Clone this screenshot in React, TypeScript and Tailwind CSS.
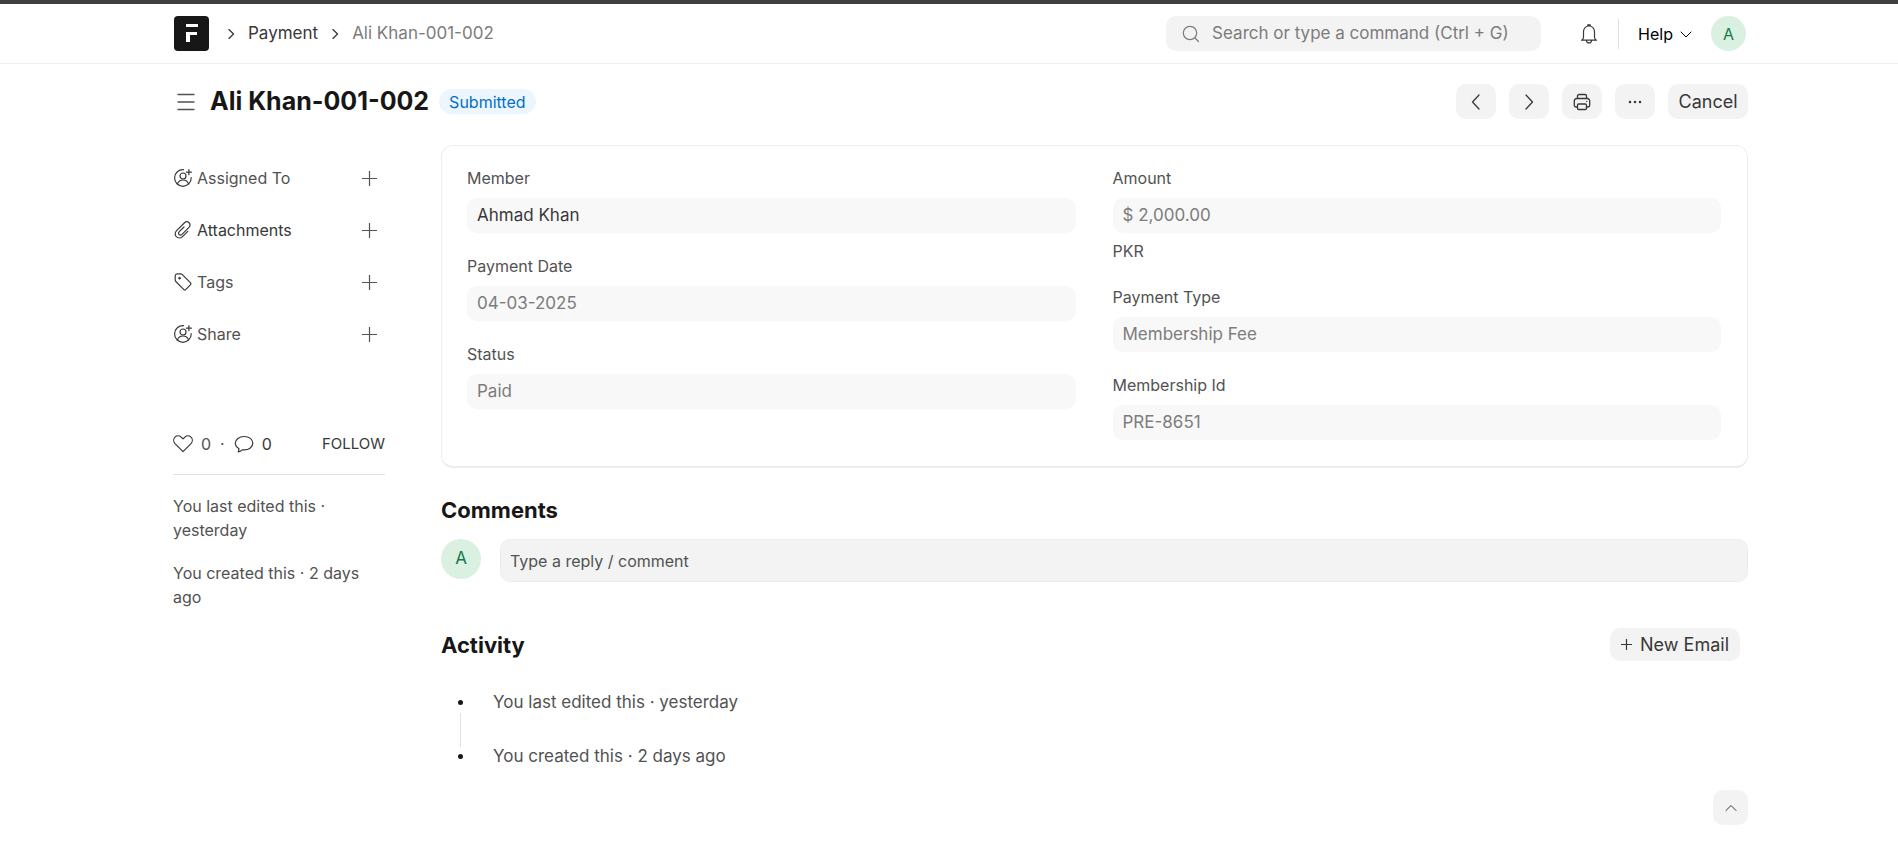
import React, { useState } from 'react';
import type { ReactNode } from 'react';

interface Field {
  id: string;
  label: string;
  value: string;
  link?: boolean;
  description?: string;
}

const leftFields: Field[] = [
  { id: 'member', label: 'Member', value: 'Ahmad Khan', link: true },
  { id: 'payment_date', label: 'Payment Date', value: '04-03-2025' },
  { id: 'status', label: 'Status', value: 'Paid' },
];

const rightFields: Field[] = [
  { id: 'amount', label: 'Amount', value: '$ 2,000.00', description: 'PKR' },
  { id: 'payment_type', label: 'Payment Type', value: 'Membership Fee' },
  { id: 'membership_id', label: 'Membership Id', value: 'PRE-8651' },
];

const activity = ['You last edited this · yesterday', 'You created this · 2 days ago'];

function Icon({ className, box = 16, children }: { className: string; box?: number; children: ReactNode }) {
  return (
    <svg
      className={className}
      viewBox={`0 0 ${box} ${box}`}
      fill="none"
      stroke="currentColor"
      strokeLinecap="round"
      strokeLinejoin="round"
      aria-hidden="true"
    >
      {children}
    </svg>
  );
}

function AssignIcon() {
  return (
    <Icon className="size-5 shrink-0" box={20}>
      <path d="M10.5 1.7A8.3 8.3 0 1 0 18.2 9.6" strokeWidth="1.2" />
      <circle cx="10" cy="8" r="3" strokeWidth="1.2" />
      <path d="M4.4 16c.9-2.6 3-4 5.6-4s4.7 1.4 5.6 4" strokeWidth="1.2" />
      <path d="M15.9 1.7v5M13.4 4.2h5" strokeWidth="1.2" />
    </Icon>
  );
}

function AttachIcon() {
  return (
    <Icon className="size-5 shrink-0" box={20}>
      <path
        d="M14.8 11.3l-5 5.1c-1.7 1.7-4.4 2.1-6.2.5-1.9-1.7-1.8-4.4 0-6.2l7.7-7.7c1.3-1.3 3.4-1.5 4.7-.3 1.4 1.3 1.3 3.3 0 4.6l-7 7c-.8.8-2 .9-2.8.2-.8-.8-.7-2 .1-2.8l4.7-4.7"
        strokeWidth="1.2"
      />
    </Icon>
  );
}

function TagIcon() {
  return (
    <Icon className="size-5 shrink-0" box={20}>
      <path
        d="M2.2 6.6V4A2.2 2.2 0 0 1 4.4 1.8H7.6c.6 0 1.1.2 1.5.6l8.5 8.5c.5.5.5 1.2 0 1.7l-5 5c-.5.5-1.2.5-1.7 0L2.8 9.5c-.4-.4-.6-.9-.6-1.5z"
        strokeWidth="1.2"
      />
      <circle cx="6.5" cy="6.2" r="1" fill="currentColor" strokeWidth="0.6" />
    </Icon>
  );
}

function PlusIcon({ className }: { className: string }) {
  return (
    <Icon className={className} box={15}>
      <path d="M7.5 0v15M0 7.5h15" strokeWidth="1.2" vectorEffect="non-scaling-stroke" />
    </Icon>
  );
}

function Avatar({ className }: { className: string }) {
  return (
    <span className={`flex shrink-0 items-center justify-center rounded-full bg-[#daf0e1] text-[#16794c] ${className}`}>
      A
    </span>
  );
}

function Crumb() {
  return (
    <Icon className="size-[10px] text-[#383838]" box={10}>
      <path d="M3 .5l4.5 4.5L3 9.5" strokeWidth="1.3" />
    </Icon>
  );
}

function Navbar() {
  return (
    <header className="border-t-4 border-b border-t-[#3f3f3f] border-b-[#ededed]">
      <div className="mx-auto flex h-[59px] max-w-[1600px] items-center pr-[3px] pl-[25px]">
        <a href="#home" aria-label="Home">
          <svg className="size-[35px]" viewBox="0 0 35 35" aria-hidden="true">
            <rect width="35" height="35" rx="4" fill="#171717" />
            <rect x="12" y="8" width="12" height="3" fill="#fff" />
            <path d="M12 16h11v3h-7v7h-4z" fill="#fff" />
          </svg>
        </a>
        <nav className="ml-[17px] flex items-center gap-3 text-[17px]">
          <Crumb />
          <a href="#payment" className="text-[#383838]">Payment</a>
          <Crumb />
          <a href="#record" className="text-[#7c7c7c]">Ali Khan-001-002</a>
        </nav>
        <label className="ml-auto flex h-[35px] w-[375px] items-center gap-3 rounded-[10px] bg-[#f3f3f3] pl-4">
          <Icon className="size-[18px] shrink-0 text-[#7c7c7c]" box={18}>
            <circle cx="8" cy="8" r="6.7" strokeWidth="1.2" />
            <path d="M13 13l3.5 3.5" strokeWidth="1.2" />
          </Icon>
          <input
            type="text"
            aria-label="Search"
            placeholder="Search or type a command (Ctrl + G)"
            className="min-w-0 grow bg-transparent text-[17px] outline-none placeholder:text-[#7c7c7c]"
          />
        </label>
        <button type="button" aria-label="Notifications" className="ml-[38px] text-[#383838]">
          <Icon className="size-5" box={20}>
            <path
              d="M2.5 16.2h15M3.5 16l1-2.6V7.5a5.5 5.5 0 0 1 11 0v5.9l1 2.6M8.7 1.9V.8h2.6v1.1M7.5 16.4a2.5 2.5 0 0 0 5 0"
              strokeWidth="1.2"
            />
          </Icon>
        </button>
        <div className="ml-[19px] h-[30px] w-px bg-[#e2e2e2]" />
        <button type="button" className="ml-[19px] flex items-center gap-[7px] text-[16px] text-black">
          Help
          <Icon className="size-3" box={12}>
            <path d="M1 4l5 5 5-5" />
          </Icon>
        </button>
        <button type="button" aria-label="Account" className="ml-[19px]">
          <Avatar className="size-[35px] text-[16px]" />
        </button>
      </div>
    </header>
  );
}

function HeadButton({ label, children }: { label: string; children: ReactNode }) {
  return (
    <button
      type="button"
      aria-label={label}
      className="flex h-[35px] w-10 items-center justify-center rounded-[10px] bg-[#f3f3f3]"
    >
      {children}
    </button>
  );
}

function PageHead({ onToggle }: { onToggle: () => void }) {
  return (
    <div className="flex h-[75px] items-center pl-7">
      <button type="button" aria-label="Toggle sidebar" onClick={onToggle} className="text-[#525252]">
        <Icon className="size-[18px]" box={18}>
          <path d="M1 1.5h16M1 9h16M1 16.5h16" strokeWidth="1.4" />
        </Icon>
      </button>
      <h1 className="ml-[15px] text-[25px] font-bold text-[#171717]">Ali Khan-001-002</h1>
      <span className="ml-[10px] flex h-[25px] items-center rounded-full bg-[#edf6fd] px-[10px] text-[16px] text-[#0070cc]">
        Submitted
      </span>
      <div className="ml-auto flex gap-[13px] text-[#383838]">
        <HeadButton label="Previous">
          <Icon className="size-4">
            <path d="M11 1L4.5 8l6.5 7" strokeWidth="1.3" />
          </Icon>
        </HeadButton>
        <HeadButton label="Next">
          <Icon className="size-4">
            <path d="M5 1l6.5 7L5 15" strokeWidth="1.3" />
          </Icon>
        </HeadButton>
        <HeadButton label="Print">
          <Icon className="size-[18px]" box={18}>
            <path
              d="M4.5 5.5V3A1.5 1.5 0 0 1 6 1.5h6A1.5 1.5 0 0 1 13.5 3v2.5M4.5 14H3a1.7 1.7 0 0 1-1.7-1.7V8A2.5 2.5 0 0 1 3.8 5.5h10.4A2.5 2.5 0 0 1 16.7 8v4.3A1.7 1.7 0 0 1 15 14h-1.5"
              strokeWidth="1.3"
            />
            <rect x="4.5" y="11" width="9" height="5.5" rx="1.2" strokeWidth="1.3" />
            <path d="M13.7 8.3h.2" strokeWidth="1.3" />
          </Icon>
        </HeadButton>
        <HeadButton label="Menu">
          <Icon className="size-4">
            <path d="M3 8h.01M8 8h.01M13 8h.01" strokeWidth="2.6" />
          </Icon>
        </HeadButton>
        <button type="button" className="h-[35px] w-20 rounded-[10px] bg-[#f3f3f3] text-[18px]">
          Cancel
        </button>
      </div>
    </div>
  );
}

const sideItems = [
  { label: 'Assigned To', icon: <AssignIcon />, color: 'text-[#525252]' },
  { label: 'Attachments', icon: <AttachIcon />, color: 'text-[#383838]' },
  { label: 'Tags', icon: <TagIcon />, color: 'text-[#525252]' },
  { label: 'Share', icon: <AssignIcon />, color: 'text-[#525252]' },
];

function Sidebar() {
  return (
    <aside className="w-[212px] shrink-0 pt-[21px] text-[16px] text-[#525252]">
      <ul className="flex flex-col gap-7">
        {sideItems.map(item => (
          <li key={item.label} className="flex h-6 items-center gap-1 pr-2 text-[#383838]">
            {item.icon}
            <span className={item.color}>{item.label}</span>
            <button type="button" aria-label={`Add ${item.label}`} className="ml-auto">
              <PlusIcon className="size-[15px] text-[#525252]" />
            </button>
          </li>
        ))}
      </ul>

      <div className="mt-[86px] flex h-6 items-center">
        <button type="button" aria-label="Like" className="flex items-center gap-2">
          <Icon className="size-5 text-[#383838]" box={20}>
            <path
              d="M10 17.6L2 9.6C.3 7.8.3 4.9 2 3.2c1.7-1.7 4.5-1.7 6.2 0L10 4.9l1.8-1.7c1.7-1.7 4.5-1.7 6.2 0 1.7 1.7 1.7 4.6 0 6.4z"
              strokeWidth="1.2"
            />
          </Icon>
          0
        </button>
        <span className="mx-[9px]">·</span>
        <a href="#comments" className="flex items-center gap-2 text-[#383838]">
          <Icon className="size-5" box={20}>
            <path
              d="M10.2 2.5c-5 0-8.9 2.9-8.9 6.6 0 2.3 1.4 4.3 3.6 5.5-.1 1.3-.2 2.3-.6 3.3 1.6-.4 2.9-1.2 3.8-2.1.7.1 1.4.1 2.1.1 5 0 8.6-3 8.6-6.8s-3.6-6.6-8.6-6.6z"
              strokeWidth="1.2"
            />
          </Icon>
          0
        </a>
        <button type="button" className="ml-auto text-[15px] text-[#383838]">FOLLOW</button>
      </div>
      <hr className="mt-[18px] border-[#e2e2e2]" />
      <div className="mt-[19px] flex flex-col gap-[19px] leading-6">
        <p>You last edited this · yesterday</p>
        <p>You created this · 2 days ago</p>
      </div>
    </aside>
  );
}

function FieldColumn({ fields }: { fields: Field[] }) {
  return (
    <div className="flex flex-1 flex-col gap-[21px]">
      {fields.map(field => (
        <div key={field.id}>
          <label htmlFor={field.id} className="block text-[16px] leading-6 text-[#525252]">
            {field.label}
          </label>
          <input
            id={field.id}
            type="text"
            readOnly
            value={field.value}
            className={`mt-2 block h-[35px] w-full rounded-[10px] bg-[#f8f8f8] px-[10px] pb-[2px] text-[17px] outline-none ${
              field.link ? 'text-[#383838]' : 'text-[#7c7c7c]'
            }`}
          />
          {field.description && (
            <p className="mt-[6px] mb-px text-[16px] leading-6 text-[#525252]">{field.description}</p>
          )}
        </div>
      ))}
    </div>
  );
}

export default function App() {
  const [showSidebar, setShowSidebar] = useState(true);

  return (
    <div className="min-h-screen bg-white font-[Inter,sans-serif]">
      <Navbar />
      <div className="mx-auto max-w-[1600px] pr-px">
        <PageHead onToggle={() => setShowSidebar(!showSidebar)} />
        <div className="flex gap-14 pt-[6px] pl-6">
          {showSidebar && <Sidebar />}

          <main className="min-w-0 grow">
            <section className="flex gap-[37px] rounded-xl border border-b-2 border-[#ededed] pt-5 pr-[26px] pb-[26px] pl-[25px]">
              <FieldColumn fields={leftFields} />
              <FieldColumn fields={rightFields} />
            </section>

            <section id="comments" className="mt-[26px]">
              <h2 className="text-[22px] leading-8 font-bold text-[#171717]">Comments</h2>
              <div className="mt-[13px] flex gap-[19px]">
                <Avatar className="size-10 text-[17px]" />
                <input
                  type="text"
                  aria-label="Comment"
                  placeholder="Type a reply / comment"
                  className="h-[43px] grow rounded-[10px] border border-[#ededed] bg-[#f3f3f3] px-[9px] text-[16px] outline-none placeholder:text-[#525252]"
                />
              </div>
            </section>

            <section className="mt-[46px]">
              <div className="flex items-center justify-between pr-2">
                <h2 className="text-[22px] leading-8 font-bold text-[#171717]">Activity</h2>
                <button
                  type="button"
                  className="flex h-[33px] items-center gap-2 rounded-[10px] bg-[#f3f3f3] px-[11px] text-[18px] text-[#383838]"
                >
                  <PlusIcon className="size-[11px]" />
                  New Email
                </button>
              </div>
              <ul className="mt-8 flex flex-col">
                {activity.map((entry, i) => (
                  <li key={entry} className="flex gap-[30px] pl-[17px] text-[17px] leading-[18px] text-[#525252]">
                    <div className="flex w-[5px] flex-col items-center">
                      <span className="mt-[7px] size-[5px] rounded-full bg-[#171717]" />
                      {i < activity.length - 1 && <span className="mt-2 h-[34px] w-px bg-[#e2e2e2]" />}
                    </div>
                    {entry}
                  </li>
                ))}
              </ul>
            </section>

            <div className="mt-[25px] flex justify-end pb-10">
              <button
                type="button"
                aria-label="Scroll to top"
                onClick={() => window.scrollTo({ top: 0, behavior: 'smooth' })}
                className="flex size-[35px] items-center justify-center rounded-[10px] bg-[#f3f3f3] text-[#383838]"
              >
                <Icon className="size-3" box={12}>
                  <path d="M1 8.5l5-5 5 5" />
                </Icon>
              </button>
            </div>
          </main>
        </div>
      </div>
    </div>
  );
}
